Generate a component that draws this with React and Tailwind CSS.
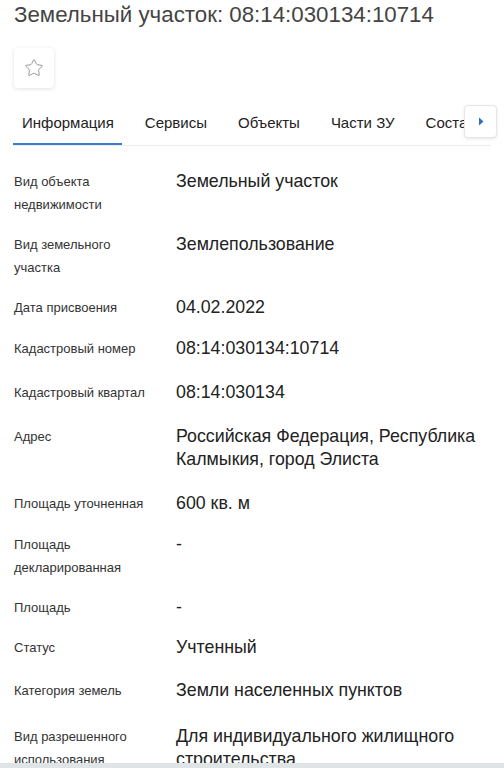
import { Star } from 'lucide-react';

const rows = [
  ['Вид объекта недвижимости', 'Земельный участок', 'mb-[17px]'],
  ['Вид земельного участка', 'Землепользование', 'mb-[17px]'],
  ['Дата присвоения', '04.02.2022', 'mb-[18px]'],
  ['Кадастровый номер', '08:14:030134:10714', 'mb-[21px]'],
  ['Кадастровый квартал', '08:14:030134', 'mb-[21px]'],
  ['Адрес', 'Российская Федерация, Республика Калмыкия, город Элиста', 'mb-[21px]'],
  ['Площадь уточненная', '600 кв. м', 'mb-[18px]'],
  ['Площадь декларированная', '-', 'mb-[17px]'],
  ['Площадь', '-', 'mb-[17px]'],
  ['Статус', 'Учтенный', 'mb-[20px]'],
  ['Категория земель', 'Земли населенных пунктов', 'mb-[23px]'],
  ['Вид разрешенного использования', 'Для индивидуального жилищного строительства', 'mb-0'],
];

const tabs = ['Информация', 'Сервисы', 'Объекты', 'Части ЗУ', 'Состав ЗУ', 'Границы'];

export default function App() {
  return (
    <div className="relative h-[768px] overflow-hidden bg-white font-['Liberation_Sans',Arial,sans-serif]">
      <h1 className="pl-[14px] pt-[1px] text-[22.3px] leading-[28px] text-[#444] whitespace-nowrap">
        Земельный участок: 08:14:030134:10714
      </h1>

      <div className="ml-[14px] mt-[19px] flex h-[40px] w-[40px] items-center justify-center rounded-sm bg-white shadow-[0_1px_4px_rgba(0,0,0,0.12)]">
        <Star size={20} strokeWidth={1.2} className="text-[#9a9a9a]" />
      </div>

      <div className="relative mx-[13px] mt-[19px] flex border-b border-[#ececec]">
        <div className="flex overflow-hidden whitespace-nowrap">
          {tabs.map((t, i) => (
            <div
              key={t}
              className={
                i === 0
                  ? 'shrink-0 border-b-2 border-[#3d7bd0] pl-[9px] pr-[8px] pb-[8px] pt-[5px] text-[15px] text-[#222]'
                  : 'ml-[14px] shrink-0 pl-[9px] pr-[8px] pb-[10px] pt-[5px] text-[15px] text-[#222]'
              }
            >
              {t}
            </div>
          ))}
        </div>
        <div className="absolute right-[-6px] top-[-2px] flex h-[33px] w-[33px] items-center justify-center rounded-sm border border-[#e6e6e6] bg-white shadow-[0_1px_3px_rgba(0,0,0,0.1)]">
          <svg width="6" height="9" viewBox="0 0 6 9">
            <path d="M1 0.5 L5.5 4.5 L1 8.5 Z" fill="#2f6fc6" />
          </svg>
        </div>
      </div>

      <div className="mt-[24px] flex flex-col pl-[14px] pr-[8px]">
        {rows.map(([k, v, mb]) => (
          <div key={k} className={`flex ${mb}`}>
            <div className="w-[140px] shrink-0 text-[13px] leading-[23px] text-[#333]">{k}</div>
            <div className="ml-[22px] flex-1 text-[17.8px] leading-[23px] text-[#222]">{v}</div>
          </div>
        ))}
      </div>

      <div className="absolute bottom-0 left-0 right-0 h-[5px] bg-[#dfe4e6]" />
    </div>
  );
}
